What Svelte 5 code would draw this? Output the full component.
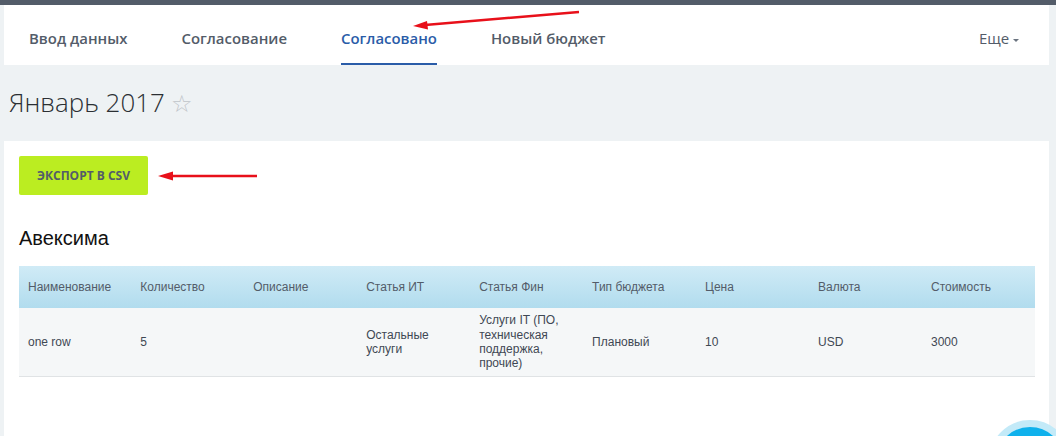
<script lang="ts">
  // Budget page: tabs, export button and one table
  const tabs = ['Ввод данных', 'Согласование', 'Согласовано', 'Новый бюджет'];
  const activeTab = 'Согласовано';
  const columns = ['Наименование', 'Количество', 'Описание', 'Статья ИТ', 'Статья Фин', 'Тип бюджета', 'Цена', 'Валюта', 'Стоимость'];
  const row = ['one row', '5', '', 'Остальные услуги', 'Услуги IT (ПО, техническая поддержка, прочие)', 'Плановый', '10', 'USD', '3000'];
</script>

<div class="page">
  <div class="topbar"></div>

  <div class="wrap">
    <nav class="tabs">
      {#each tabs as tab}
        <a class="tab" class:active={tab === activeTab} href="#top">{tab}</a>
      {/each}
      <span class="more">Еще <i class="caret"></i></span>
    </nav>

    <h1 class="title">Январь 2017 <span class="star">☆</span></h1>

    <section class="panel">
      <button class="export">ЭКСПОРТ В CSV</button>
      <h2 class="company">Авексима</h2>
      <table>
        <thead>
          <tr>
            {#each columns as col}
              <th>{col}</th>
            {/each}
          </tr>
        </thead>
        <tbody>
          <tr>
            {#each row as cell}
              <td>{cell}</td>
            {/each}
          </tr>
        </tbody>
      </table>
    </section>
  </div>

  <!-- red annotation arrows drawn over the screenshot -->
  <svg class="arrows" width="1056" height="436" viewBox="0 0 1056 436" aria-hidden="true">
    <path d="M579 12 L425 25" stroke="#e8101a" stroke-width="2.5" fill="none" />
    <path d="M413 26 L427 21 L428 29.5 Z" fill="#e8101a" />
    <path d="M257 176 L170 176" stroke="#e8101a" stroke-width="2.5" fill="none" />
    <path d="M158 176 L173 171.5 L173 180.5 Z" fill="#e8101a" />
  </svg>

  <div class="chat"></div>
</div>

<style>
  :global(body) {
    margin: 0;
    background: #eef2f4;
  }

  .page {
    position: relative;
    height: 436px;
    overflow: hidden;
    background: #eef2f4;
  }

  .topbar {
    height: 5px;
    background: #535c69;
  }

  .wrap {
    padding: 0 7px 0 4px;
  }

  .tabs {
    display: flex;
    align-items: flex-start;
    gap: 54px;
    height: 60px;
    padding: 0 30px 0 25px;
    background: #fff;
    font-family: 'Open Sans', sans-serif;
    font-size: 14.92px;
    font-weight: 600;
  }

  .tab {
    height: 58px;
    line-height: 66px;
    color: #535c69;
    text-decoration: none;
    white-space: nowrap;
  }

  .tab.active {
    color: #2a5ca8;
    border-bottom: 2px solid #2a5ca8;
  }

  .more {
    margin-left: auto;
    line-height: 66px;
    font-size: 15px;
    font-weight: 400;
    color: #535c69;
    white-space: nowrap;
  }

  .caret {
    display: inline-block;
    margin-left: 0;
    vertical-align: 2px;
    border-top: 3px solid #6b7480;
    border-left: 3px solid transparent;
    border-right: 3px solid transparent;
  }

  .title {
    height: 76px;
    margin: 0;
    padding-left: 5px;
    font-family: 'Open Sans', sans-serif;
    font-size: 25.9px;
    font-weight: 300;
    line-height: 74px;
    color: #2b2f33;
    white-space: nowrap;
  }

  .star {
    font-family: 'DejaVu Sans', sans-serif;
    font-size: 24px;
    color: #bfc4c9;
  }

  .panel {
    height: 295px;
    padding: 15px 14px 0 15px;
    background: #fff;
  }

  .export {
    display: block;
    width: 129px;
    height: 39px;
    padding: 0;
    border: 0;
    border-radius: 2px;
    background: #bbed21;
    color: #535c69;
    font-family: 'Open Sans', sans-serif;
    font-size: 12px;
    font-weight: 700;
  }

  .company {
    margin: 31px 0 16px;
    font-family: 'Liberation Sans', Arial, sans-serif;
    font-size: 20px;
    font-weight: 400;
    line-height: 24px;
    color: #111;
  }

  table {
    width: 1016px;
    table-layout: fixed;
    border-collapse: collapse;
    font-family: 'Liberation Sans', Arial, sans-serif;
    font-size: 12px;
    color: #535c69;
  }

  th {
    height: 42px;
    padding: 0 9px;
    background: linear-gradient(#d0ebf6, #b1dcee);
    font-weight: 400;
    text-align: left;
  }

  th:first-child {
    width: 94.3px;
  }

  td {
    height: 68px;
    padding: 0 9px;
    background: #f5f7f8;
    border-bottom: 1px solid #e0e3e5;
    line-height: 14.3px;
    color: #3f4854;
  }

  .arrows {
    position: absolute;
    top: 0;
    left: 0;
    pointer-events: none;
  }

  .chat {
    position: absolute;
    left: 989px;
    top: 420px;
    width: 82px;
    height: 82px;
    box-sizing: border-box;
    border: 7px solid #c3eaf8;
    border-radius: 50%;
    background: #0fb1ec;
  }
</style>
